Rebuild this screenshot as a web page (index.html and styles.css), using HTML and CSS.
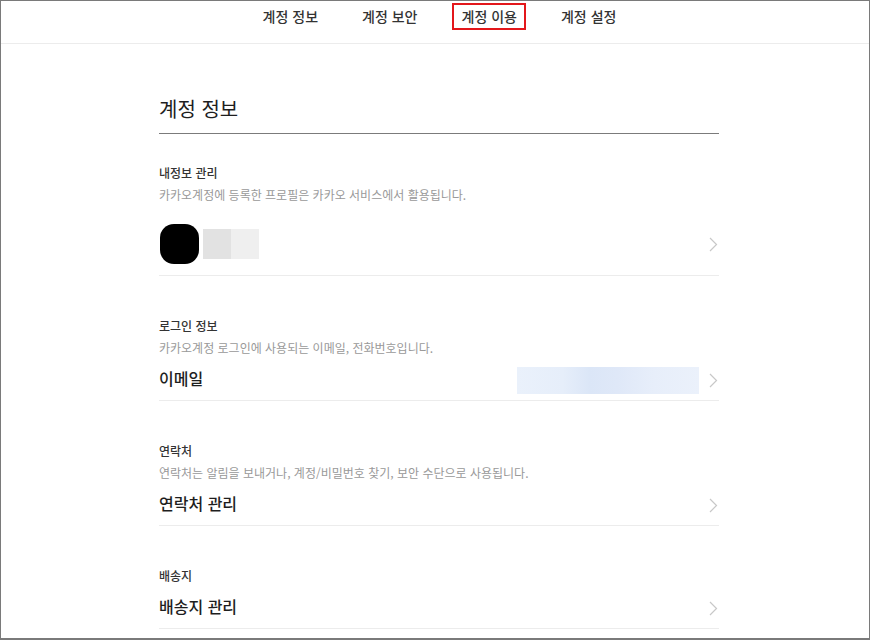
FILE: index.html
```html
<!DOCTYPE html>
<html lang="ko">
<head>
<meta charset="utf-8">
<title>계정 정보</title>
<link rel="stylesheet" href="styles.css">
</head>
<body>
<div class="frame">
  <header class="topbar">
    <nav class="tabs">
      <span class="tab">계정 정보</span>
      <span class="tab">계정 보안</span>
      <span class="tab tab-marked">계정 이용</span>
      <span class="tab">계정 설정</span>
    </nav>
  </header>
  <main class="content">
    <h1 class="page-title">계정 정보</h1>

    <section class="section section-first">
      <h2 class="sec-label">내정보 관리</h2>
      <p class="sec-desc">카카오계정에 등록한 프로필은 카카오 서비스에서 활용됩니다.</p>
      <div class="row row-profile">
        <div class="profile">
          <span class="avatar"></span>
          <span class="name-blur"><span class="nb1"></span><span class="nb2"></span></span>
        </div>
        <svg class="chev" width="9" height="15" viewBox="0 0 9 15"><path d="M1 1 L7.5 7.5 L1 14" fill="none" stroke="#c8c8c8" stroke-width="1.2"/></svg>
      </div>
    </section>

    <section class="section">
      <h2 class="sec-label">로그인 정보</h2>
      <p class="sec-desc">카카오계정 로그인에 사용되는 이메일, 전화번호입니다.</p>
      <div class="row">
        <span class="row-title">이메일</span>
        <div class="row-right">
          <span class="email-blur"></span>
          <svg class="chev" width="9" height="15" viewBox="0 0 9 15"><path d="M1 1 L7.5 7.5 L1 14" fill="none" stroke="#c8c8c8" stroke-width="1.2"/></svg>
        </div>
      </div>
    </section>

    <section class="section">
      <h2 class="sec-label">연락처</h2>
      <p class="sec-desc">연락처는 알림을 보내거나, 계정/비밀번호 찾기, 보안 수단으로 사용됩니다.</p>
      <div class="row">
        <span class="row-title">연락처 관리</span>
        <svg class="chev" width="9" height="15" viewBox="0 0 9 15"><path d="M1 1 L7.5 7.5 L1 14" fill="none" stroke="#c8c8c8" stroke-width="1.2"/></svg>
      </div>
    </section>

    <section class="section">
      <h2 class="sec-label">배송지</h2>
      <div class="row">
        <span class="row-title">배송지 관리</span>
        <svg class="chev" width="9" height="15" viewBox="0 0 9 15"><path d="M1 1 L7.5 7.5 L1 14" fill="none" stroke="#c8c8c8" stroke-width="1.2"/></svg>
      </div>
    </section>
  </main>
</div>
</body>
</html>
```

FILE: styles.css
```css
* { box-sizing: border-box; }
html, body {
  margin: 0;
  padding: 0;
  background: #fff;
}
body {
  font-family: "Noto Sans CJK KR", "Noto Sans", sans-serif;
  color: #222;
}
.frame {
  width: 870px;
  height: 640px;
  border: 1px solid #7a7a7a;
  border-bottom-width: 2px;
  overflow: hidden;
}
.topbar {
  height: 43px;
  border-bottom: 1px solid #ececec;
  padding-top: 2px;
}
.tabs {
  display: flex;
  justify-content: center;
  gap: 25px;
  padding-left: 8px;
}
.tab {
  display: block;
  height: 27px;
  line-height: 26px;
  padding: 0 9px 0 10px;
  font-size: 14px;
  font-weight: 500;
  color: #333;
}
.tab-marked {
  box-shadow: inset 0 0 0 2px #e3171b;
}
.content {
  width: 560px;
  margin-left: 158px;
}
.page-title {
  margin: 51px 0 0;
  font-size: 20px;
  line-height: 28px;
  font-weight: 400;
  color: #1e1e1e;
  padding-bottom: 10px;
  border-bottom: 1px solid #7b7b7b;
}
.section {
  padding-top: 40px;
  border-bottom: 1px solid #ececec;
}
.section-first {
  padding-top: 29px;
}
.sec-label {
  margin: 0;
  font-size: 12px;
  line-height: 20px;
  font-weight: 500;
  color: #333;
}
.sec-desc {
  margin: 2px 0 0;
  font-size: 12px;
  line-height: 20px;
  color: #999;
}
.row {
  display: flex;
  align-items: center;
  justify-content: space-between;
  height: 40px;
  margin-top: 2px;
}
.row-profile {
  height: 62px;
  margin-top: 8px;
}
.row-title {
  font-size: 16px;
  line-height: 22px;
  font-weight: 500;
  color: #1e1e1e;
  margin-bottom: 4px;
}
.row-right {
  display: flex;
  align-items: center;
  gap: 10px;
}
.chev {
  display: block;
  margin-right: 1px;
}
.profile {
  display: flex;
  align-items: center;
  gap: 4px;
  padding-left: 1px;
}
.avatar {
  display: block;
  width: 39px;
  height: 40px;
  background: #000;
  border-radius: 14px;
}
.name-blur {
  display: flex;
}
.nb1, .nb2 {
  display: block;
  width: 28px;
  height: 30px;
}
.nb1 { background: #e2e2e2; }
.nb2 { background: #efefef; }
.email-blur {
  display: block;
  width: 182px;
  height: 27px;
  background: linear-gradient(90deg, #eaf1fb 0%, #e6eefa 25%, #dbe6f7 40%, #dfe8f8 55%, #e7eefa 75%, #ebf1fb 100%);
}
```
